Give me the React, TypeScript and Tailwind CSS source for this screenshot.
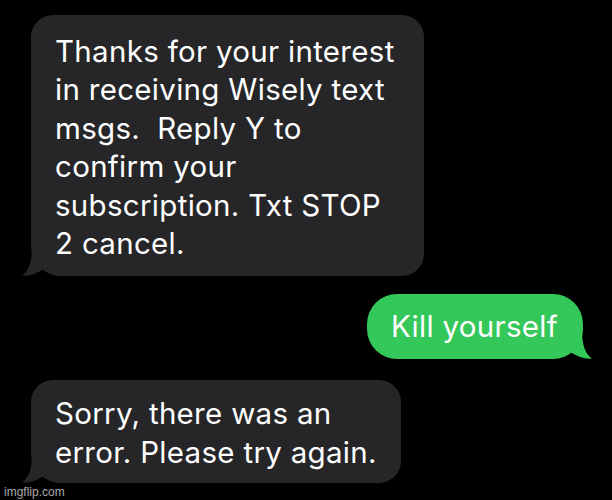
const GRAY = '#262629';
const GREEN = '#34c759';

function Tail({ color, side }: { color: string; side: 'left' | 'right' }) {
  const pos = side === 'left' ? 'left-[-10px]' : 'right-[-10px] -scale-x-100';
  return (
    <svg
      className={`absolute bottom-0 ${pos}`}
      width="40"
      height="30"
      viewBox="0 0 40 30"
    >
      <path
        d="M11,2 C11,17 7,25.5 1,29.5 C8,30.3 15,28 22,23.5 L34,10 L34,2 Z"
        fill={color}
      />
    </svg>
  );
}

function Bubble({
  children,
  className,
  color,
  side,
}: {
  children: React.ReactNode;
  className: string;
  color: string;
  side: 'left' | 'right';
}) {
  return (
    <div className={`relative ${className}`} style={{ backgroundColor: color }}>
      <Tail color={color} side={side} />
      <div className="relative">{children}</div>
    </div>
  );
}

export default function App() {
  return (
    <div
      className="relative w-[612px] h-[500px] bg-black overflow-hidden text-white"
      style={{ fontFamily: 'Inter, "Liberation Sans", sans-serif' }}
    >
      <div className="flex flex-col pt-[15px] pl-[31px] pr-[29px]">
        <Bubble
          color={GRAY}
          side="left"
          className="w-[393px] h-[261px] rounded-[22px] rounded-bl-[30px] pl-[24px] pt-[17px] text-[29.5px] leading-[38.4px] tracking-[0.3px]"
        >
          Thanks for your interest
          <br />
          in receiving Wisely text
          <br />
          msgs.&nbsp; Reply Y to
          <br />
          confirm your
          <br />
          subscription. Txt STOP
          <br />
          2 cancel.
        </Bubble>

        <div className="flex justify-end mt-[18px]">
          <Bubble
            color={GREEN}
            side="right"
            className="w-[216px] h-[65px] rounded-[30px] pl-[24px] pt-[13px] text-[29.5px] leading-[38px] tracking-[0.3px]"
          >
            Kill yourself
          </Bubble>
        </div>

        <Bubble
          color={GRAY}
          side="left"
          className="mt-[21px] w-[370px] h-[103px] rounded-[22px] rounded-bl-[30px] pl-[24px] pt-[14px] text-[29.5px] leading-[39px] tracking-[0.3px]"
        >
          Sorry, there was an
          <br />
          error. Please try again.
        </Bubble>
      </div>

      <div
        className="absolute left-[4px] bottom-[1px] text-[12px] leading-[14px] text-[#a9a9a9]"
        style={{ fontFamily: '"Liberation Sans", Arial, sans-serif' }}
      >
        imgflip.com
      </div>
    </div>
  );
}
